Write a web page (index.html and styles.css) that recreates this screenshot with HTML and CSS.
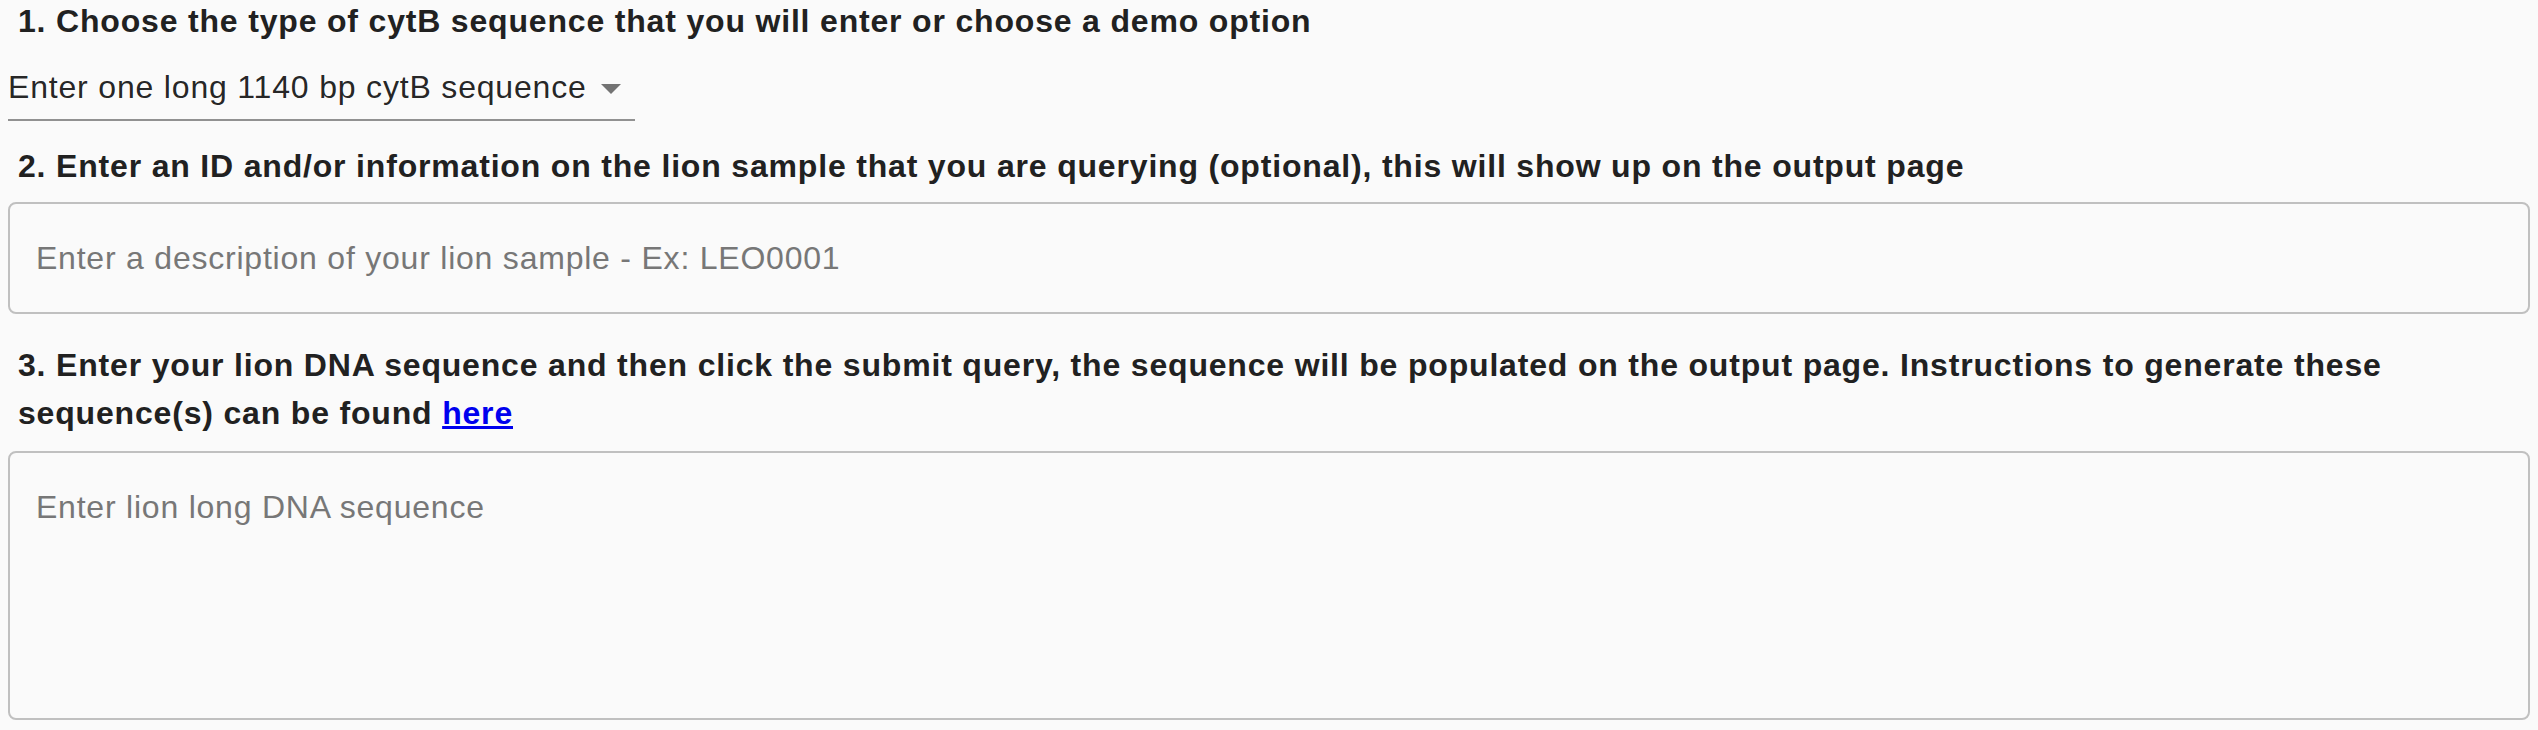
FILE: index.html
```html
<!DOCTYPE html>
<html lang="en">
<head>
<meta charset="utf-8">
<title>Lion cytB query</title>
<link rel="stylesheet" href="styles.css">
</head>
<body>
<main class="page">
  <p class="question first">1. Choose the type of cytB sequence that you will enter or choose a demo option</p>
  <div class="select">
    <span class="select-value">Enter one long 1140 bp cytB sequence</span>
    <svg class="select-icon" viewBox="0 0 24 24" aria-hidden="true"><path d="M7 10l5 5 5-5z"></path></svg>
  </div>
  <p class="question second">2. Enter an ID and/or information on the lion sample that you are querying (optional), this will show up on the output page</p>
  <input class="field" type="text" placeholder="Enter a description of your lion sample - Ex: LEO0001">
  <p class="question third">3. Enter your lion DNA sequence and then click the submit query, the sequence will be populated on the output page. Instructions to generate these sequence(s) can be found <a href="#" class="link">here</a></p>
  <textarea class="field area" placeholder="Enter lion long DNA sequence"></textarea>
</main>
</body>
</html>
```

FILE: styles.css
```css
html, body {
  margin: 0;
  padding: 0;
  background: #fafafa;
}

body {
  font-family: "Liberation Sans", Arial, Helvetica, sans-serif;
  color: rgba(0, 0, 0, 0.87);
  letter-spacing: 0.82px;
}

.page {
  display: flex;
  flex-direction: column;
  align-items: flex-start;
  padding: 0 8px;
}

.question {
  margin: 0 0 12px 0;
  padding-left: 10px;
  font-size: 32px;
  line-height: 48px;
  font-weight: 700;
  color: #212121;
}

.question.first { margin-top: -3px; }
.question.second { margin-top: 21px; }
.question.third { margin-top: 27px; margin-bottom: 14px; }

.link {
  color: #0000ee;
  text-decoration: underline;
}

.select {
  position: relative;
  display: inline-flex;
  align-items: center;
  box-sizing: border-box;
  height: 64px;
  padding: 12px 48px 14px 0;
  border-bottom: 2px solid #919191;
  font-size: 32px;
  line-height: 38px;
  color: rgba(0, 0, 0, 0.87);
}

.select-value {
  white-space: nowrap;
}

.select-icon {
  position: absolute;
  right: 0;
  top: 7px;
  width: 48px;
  height: 48px;
  fill: #737373;
}

.field {
  display: block;
  box-sizing: border-box;
  width: 100%;
  margin: 0;
  height: 112px;
  padding: 35px 26px;
  border: 2px solid #c0c0c0;
  border-radius: 8px;
  background: transparent;
  font-family: "Liberation Sans", Arial, Helvetica, sans-serif;
  font-size: 32px;
  line-height: 38px;
  letter-spacing: 0.78px;
  color: rgba(0, 0, 0, 0.87);
  outline: none;
}

.field::placeholder {
  color: #777777;
  opacity: 1;
}

.area {
  height: 269px;
  resize: none;
  overflow: hidden;
}
```
